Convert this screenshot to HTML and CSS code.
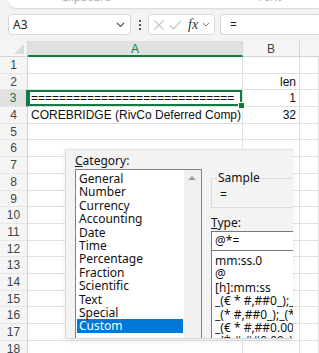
FILE: index.html
```html
<!DOCTYPE html>
<html lang="en">
<head>
  <meta charset="UTF-8">
  <title>Format Cells</title>
  <link rel="stylesheet" href="styles.css">
</head>
<body>
  <div class="ribbon">
    <div class="ribbon-panel">
      <span class="grp g1">Clipboard</span>
      <span class="grp g2">Font</span>
    </div>
  </div>

  <div class="fbar">
    <div class="namebox">
      <span>A3</span>
      <svg width="9" height="6" viewBox="0 0 9 6"><path d="M1 1l3.5 3.5L8 1" fill="none" stroke="#555" stroke-width="1.1"/></svg>
    </div>
    <div class="dots"><i></i><i></i><i></i></div>
    <div class="fxbox">
      <svg width="12" height="12" viewBox="0 0 12 12"><path d="M1.5 1.5l9 9M10.5 1.5l-9 9" stroke="#c4c4c4" stroke-width="1.1"/></svg>
      <svg width="13" height="12" viewBox="0 0 13 12"><path d="M1 6.5l3.5 3.5L12 2" fill="none" stroke="#c4c4c4" stroke-width="1.1"/></svg>
      <span class="fx">fx</span>
      <svg width="8" height="5" viewBox="0 0 8 5"><path d="M1 1l3 3 3-3" fill="none" stroke="#777" stroke-width="1"/></svg>
    </div>
    <div class="formula">=</div>
  </div>

  <div class="sheet">
    <div class="corner"><b></b></div>
    <div class="colhead sel">A</div>
    <div class="colhead">B</div>
    <div class="colhead last"></div>

    <div class="rowhead">1</div><div class="cell"></div><div class="cell num"></div><div class="cell"></div>
    <div class="rowhead">2</div><div class="cell"></div><div class="cell num">len</div><div class="cell"></div>
    <div class="rowhead sel">3</div><div class="cell active"><span>=============================</span></div><div class="cell num">1</div><div class="cell"></div>
    <div class="rowhead">4</div><div class="cell">COREBRIDGE (RivCo Deferred Comp)</div><div class="cell num">32</div><div class="cell"></div>
    <div class="rowhead">5</div><div class="cell"></div><div class="cell"></div><div class="cell"></div>
    <div class="rowhead">6</div><div class="cell"></div><div class="cell"></div><div class="cell"></div>
    <div class="rowhead">7</div><div class="cell"></div><div class="cell"></div><div class="cell"></div>
    <div class="rowhead">8</div><div class="cell"></div><div class="cell"></div><div class="cell"></div>
    <div class="rowhead">9</div><div class="cell"></div><div class="cell"></div><div class="cell"></div>
    <div class="rowhead">10</div><div class="cell"></div><div class="cell"></div><div class="cell"></div>
    <div class="rowhead">11</div><div class="cell"></div><div class="cell"></div><div class="cell"></div>
    <div class="rowhead">12</div><div class="cell"></div><div class="cell"></div><div class="cell"></div>
    <div class="rowhead">13</div><div class="cell"></div><div class="cell"></div><div class="cell"></div>
    <div class="rowhead">14</div><div class="cell"></div><div class="cell"></div><div class="cell"></div>
    <div class="rowhead">15</div><div class="cell"></div><div class="cell"></div><div class="cell"></div>
    <div class="rowhead">16</div><div class="cell"></div><div class="cell"></div><div class="cell"></div>
    <div class="rowhead">17</div><div class="cell"></div><div class="cell"></div><div class="cell"></div>
    <div class="rowhead">18</div><div class="cell"></div><div class="cell"></div><div class="cell"></div>
  </div>

  <div class="dialog">
    <div class="left">
      <div class="label"><u>C</u>ategory:</div>
      <div class="catlist">
        <ul>
          <li>General</li>
          <li>Number</li>
          <li>Currency</li>
          <li>Accounting</li>
          <li>Date</li>
          <li>Time</li>
          <li>Percentage</li>
          <li>Fraction</li>
          <li>Scientific</li>
          <li>Text</li>
          <li>Special</li>
          <li class="picked">Custom</li>
        </ul>
        <div class="scroll"><span class="up"></span></div>
      </div>
    </div>
    <div class="right">
      <div class="sample">
        <span class="legend">Sample</span>
        <div class="sample-val">=</div>
      </div>
      <div class="label"><u>T</u>ype:</div>
      <div class="typebox">@*=</div>
      <ul class="typelist">
        <li>mm:ss.0</li>
        <li>@</li>
        <li>[h]:mm:ss</li>
        <li>_(€ * #,##0_);_(€ * (#,##0);_(€ * "-"_);_(@_)</li>
        <li>_(* #,##0_);_(* (#,##0);_(* "-"_);_(@_)</li>
        <li>_(€ * #,##0.00_);_(€ * (#,##0.00);_(€ * "-"??_);_(@_)</li>
        <li>_(* #,##0.00_);_(* (#,##0.00);_(* "-"??_);_(@_)</li>
      </ul>
    </div>
  </div>
</body>
</html>
```

FILE: styles.css
```css
body {
  margin: 0;
  width: 319px;
  height: 353px;
  overflow: hidden;
  background-color: #f3f3f3;
  font-family: "Noto Sans", "Liberation Sans", sans-serif;
  position: relative;
}

/* ribbon bottom edge */
.ribbon {
  height: 8px;
  padding-left: 8px;
}
.ribbon-panel {
  height: 8px;
  background: #fff;
  border-radius: 0 0 0 8px;
  box-shadow: 0 1px 2px rgba(0, 0, 0, 0.12);
  position: relative;
  overflow: hidden;
}
.grp {
  position: absolute;
  top: -11px;
  font-size: 11px;
  color: #aaa;
}
.g1 { left: 53px; }
.g2 { left: 250px; }

/* formula bar */
.fbar {
  display: flex;
  align-items: center;
  margin-top: 6px;
  padding-left: 8px;
  height: 21px;
}
.namebox {
  width: 123px;
  height: 21px;
  box-sizing: border-box;
  background: #fff;
  border: 1px solid #d6d6d6;
  border-radius: 4px;
  display: flex;
  align-items: center;
  justify-content: space-between;
  padding: 0 5px 0 4px;
  font-size: 12px;
  color: #222;
}
.dots {
  width: 17px;
  display: flex;
  flex-direction: column;
  align-items: center;
  gap: 2px;
}
.dots i {
  width: 2px;
  height: 2px;
  background: #555;
}
.fxbox {
  width: 67px;
  height: 21px;
  box-sizing: border-box;
  border: 1px solid #d6d6d6;
  border-radius: 4px;
  background: #fff;
  display: flex;
  align-items: center;
  gap: 4px;
  padding-left: 4px;
}
.fx {
  font-family: "Liberation Serif", serif;
  font-style: italic;
  font-size: 14px;
  color: #333;
  margin-left: 2px;
}
.formula {
  flex: 1;
  margin-left: 5px;
  height: 21px;
  box-sizing: border-box;
  border: 1px solid #d6d6d6;
  border-right: 0;
  border-radius: 4px 0 0 4px;
  background: #fff;
  font-size: 12px;
  line-height: 19px;
  padding-left: 9px;
  color: #222;
}

/* grid */
.sheet {
  margin-top: 6px;
  display: grid;
  grid-template-columns: 28px 215px 57px 1fr;
  grid-template-rows: 16px;
  grid-auto-rows: 16.7px;
  background: #fff;
  font-family: "Liberation Sans", sans-serif;
}
.corner {
  background: #f5f5f5;
  border-right: 1px solid #d4d4d4;
  border-bottom: 1px solid #d4d4d4;
  position: relative;
}
.corner b {
  position: absolute;
  right: 3px;
  bottom: 2px;
  border-left: 10px solid transparent;
  border-bottom: 10px solid #dadada;
}
.colhead {
  background: #f5f5f5;
  border-right: 1px solid #d4d4d4;
  border-bottom: 1px solid #d4d4d4;
  font-size: 12px;
  color: #444;
  text-align: center;
  line-height: 16px;
}
.colhead.sel {
  background: #e1e1e1;
  color: #107c41;
  border-bottom: 2px solid #107c41;
}
.colhead.last { border-right: 0; }
.rowhead {
  background: #f5f5f5;
  border-right: 1px solid #d4d4d4;
  border-bottom: 1px solid #e6e6e6;
  font-size: 12px;
  color: #444;
  text-align: center;
  line-height: 16px;
}
.rowhead.sel {
  background: #e1e1e1;
  color: #107c41;
  border-right: 2px solid #107c41;
}
.cell {
  border-right: 1px solid #e1e1e1;
  border-bottom: 1px solid #e1e1e1;
  font-size: 12px;
  line-height: 16px;
  color: #111;
  padding-left: 3px;
  white-space: nowrap;
  overflow: hidden;
}
.cell.num {
  text-align: right;
  padding-right: 3px;
}
.cell.active {
  position: relative;
  overflow: visible;
  box-shadow: inset 0 0 0 2px #107c41;
}
.cell.active span {
  display: block;
  overflow: hidden;
  margin-right: 4px;
}
.cell.active::after {
  content: "";
  position: absolute;
  right: -3px;
  bottom: -3px;
  width: 5px;
  height: 5px;
  background: #107c41;
  border: 1px solid #fff;
}

/* format cells dialog */
.dialog {
  position: absolute;
  left: 65px;
  top: 149px;
  width: 227px;
  height: 188px;
  background: #f3f3f3;
  border-left: 1px solid #d8d8d8;
  border-top: 1px solid #e4e4e4;
  border-bottom: 1px solid #d8d8d8;
  box-shadow: 0 2px 6px rgba(0, 0, 0, 0.08);
  display: flex;
  overflow: hidden;
  font-size: 12px;
  color: #111;
}
.left {
  padding: 3px 0 0 9px;
  width: 127px;
  flex: none;
}
.label {
  height: 16px;
  line-height: 16px;
}
.catlist {
  height: 175px;
  display: flex;
  border: 1px solid #828282;
  border-bottom: 0;
  background: #fff;
}
.catlist ul {
  list-style: none;
  margin: 0;
  padding: 2px 1px 0 1px;
  flex: 1;
}
.catlist li {
  height: 13.4px;
  line-height: 13.4px;
  padding-left: 2px;
}
.catlist li.picked {
  background: #0078d7;
  color: #fff;
}
.scroll {
  width: 17px;
  background: #f0f0f0;
  position: relative;
}
.up {
  position: absolute;
  left: 4px;
  top: 6px;
  border-left: 4px solid transparent;
  border-right: 4px solid transparent;
  border-bottom: 4px solid #a0a0a0;
}
.right {
  padding: 28px 0 0 9px;
  flex: 1;
  min-width: 0;
}
.sample {
  height: 28px;
  border: 1px solid #dcdcdc;
  border-right: 0;
  position: relative;
  margin-bottom: 7px;
}
.legend {
  position: absolute;
  left: 5px;
  top: -9px;
  background: #f3f3f3;
  padding: 0 1px;
  line-height: 16px;
}
.sample-val {
  padding: 8px 0 0 8px;
  line-height: 16px;
}
.typebox {
  height: 20px;
  box-sizing: border-box;
  background: #fff;
  border: 1px solid #7a7a7a;
  border-right: 0;
  line-height: 18px;
  padding-left: 3px;
}
.typelist {
  list-style: none;
  margin: 0;
  height: 90px;
  background: #fff;
  border: 1px solid #7a7a7a;
  border-top: 0;
  border-right: 0;
  padding: 3px 0 0 3px;
  white-space: nowrap;
  overflow: hidden;
}
.typelist li {
  height: 13.4px;
  line-height: 13.4px;
  overflow: hidden;
}
```
